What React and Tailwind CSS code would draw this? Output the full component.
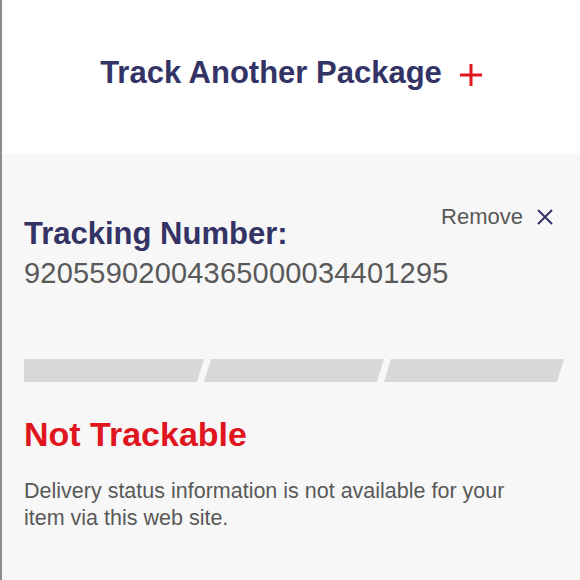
export default function App() {
  return (
    <div className="w-[580px] h-[580px] overflow-hidden border-l-2 border-[#8c8c8c] font-[family-name:'Liberation_Sans',Arial,sans-serif]">
      <div className="h-[154px] bg-white pt-[55px] flex justify-center">
        <button className="flex items-start gap-[18px] text-[#333366]">
          <span className="text-[31px] leading-[36px] font-bold">Track Another Package</span>
          <svg width="22" height="22" viewBox="0 0 22 22" className="mt-[9px]">
            <path d="M11 0v22M0 11h22" stroke="#e0161f" strokeWidth="3" />
          </svg>
        </button>
      </div>

      <div className="h-[426px] bg-[#f7f7f7] pt-[50px] pl-[22px] pr-[27px]">
        <div className="flex items-start justify-between">
          <div className="mt-[13px] text-[31px] leading-[34px] font-bold text-[#333366]">Tracking Number:</div>
          <button className="flex items-center gap-[14px] text-[22px] leading-[26px] text-[#595959]">
            Remove
            <svg width="16" height="16" viewBox="0 0 16 16">
              <path d="M1 1l14 14M15 1L1 15" stroke="#333366" strokeWidth="2" />
            </svg>
          </button>
        </div>
        <div className="mt-[2px] text-[29px] leading-[40px] tracking-[0.2px] text-[#595959]">92055902004365000034401295</div>

        <div className="mt-[66px] mr-[-11px] grid grid-cols-3 h-[23px]">
          <div className="bg-[#d8d8d8] [clip-path:polygon(0_0,100%_0,calc(100%-7px)_100%,0_100%)]" />
          <div className="bg-[#d8d8d8] [clip-path:polygon(7px_0,100%_0,calc(100%-7px)_100%,0_100%)]" />
          <div className="bg-[#d8d8d8] [clip-path:polygon(7px_0,100%_0,calc(100%-7px)_100%,0_100%)]" />
        </div>

        <h2 className="mt-[34px] text-[34px] leading-[36px] font-bold text-[#e0161f]">Not Trackable</h2>
        <p className="mt-[26px] max-w-[500px] text-[21.5px] leading-[27px] text-[#595959]">
          Delivery status information is not available for your item via this web site.
        </p>
      </div>
    </div>
  )
}
